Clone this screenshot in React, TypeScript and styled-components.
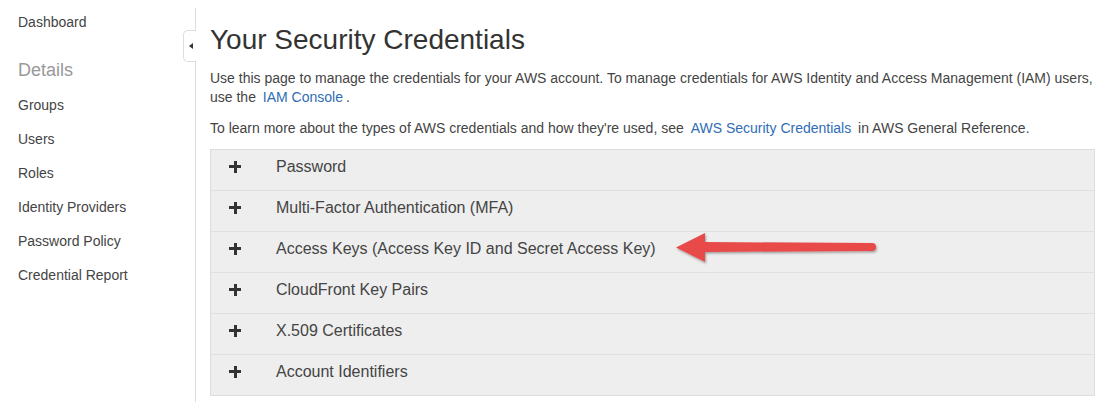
import React from 'react'
import styled, { createGlobalStyle } from 'styled-components'

const GlobalStyle = createGlobalStyle`
    html, body {
        margin: 0;
        padding: 0;
        background: #fff;
    }
    body {
        font-family: "Liberation Sans", Arial, sans-serif;
        color: #444;
    }
`

const PageStyled = styled.div`
    display: flex;
    width: 1102px;
    height: 402px;
    overflow: hidden;
    box-sizing: border-box;
`

const SidebarStyled = styled.nav`
    position: relative;
    flex: 0 0 196px;
    box-sizing: border-box;
    margin-top: 8px;
    padding: 4px 0 0 18px;
    border-right: 1px solid #ddd;
`

const SidebarListStyled = styled.ul`
    list-style: none;
    margin: 0;
    padding: 0;
    display: flex;
    flex-direction: column;
    gap: 14px;
`

const SidebarLinkStyled = styled.li`
    font-size: 14px;
    line-height: 20px;
    color: #444;
`

const SidebarHeadingStyled = styled.div`
    font-size: 18px;
    line-height: 24px;
    color: #999;
    margin: 26px 0 13px;
`

const CollapseTabStyled = styled.button`
    position: absolute;
    top: 22px;
    right: -1px;
    width: 13px;
    height: 32px;
    padding: 0;
    box-sizing: border-box;
    background: #fff;
    border: 1px solid #ddd;
    border-right: none;
    border-radius: 5px 0 0 5px;
    display: grid;
    place-items: center;
    cursor: pointer;
`

const CaretStyled = styled.span`
    width: 0;
    height: 0;
    margin-left: 1px;
    border-top: 3px solid transparent;
    border-bottom: 3px solid transparent;
    border-right: 4px solid #333;
`

const MainStyled = styled.main`
    flex: 1;
    padding: 0 7px 0 14px;
    min-width: 0;
`

const TitleStyled = styled.h1`
    margin: 24px 0 0;
    font-size: 28px;
    line-height: 32px;
    font-weight: normal;
    color: #333;
    white-space: nowrap;
`

const ParagraphStyled = styled.p<{ $top: number }>`
    margin: ${p => p.$top}px 0 0;
    font-size: 14px;
    line-height: 19px;
    color: #444;
    white-space: nowrap;
`

const LinkStyled = styled.a`
    color: #2f6db5;
    text-decoration: none;
    margin: 0 3px;
    cursor: pointer;
`

const AccordionStyled = styled.div`
    position: relative;
    margin-top: 11px;
    border: 1px solid #ddd;
    background: #eee;
`

const AccordionRowStyled = styled.div`
    display: flex;
    align-items: flex-start;
    height: 40px;
    box-sizing: border-box;
    padding: 7px 0 0 18px;
    border-top: 1px solid #e0e0e0;
    &:first-child {
        height: 40px;
        border-top: none;
    }
    & + & {
        height: 41px;
    }
`

const PlusStyled = styled.span`
    position: relative;
    flex: 0 0 12px;
    height: 20px;
    &::before, &::after {
        content: "";
        position: absolute;
        background: #333;
    }
    &::before {
        left: 0;
        top: 8px;
        width: 12px;
        height: 3px;
    }
    &::after {
        left: 4.5px;
        top: 3.5px;
        width: 3px;
        height: 12px;
    }
`

const RowLabelStyled = styled.span`
    margin-left: 35px;
    font-size: 16px;
    line-height: 20px;
    color: #444;
    white-space: nowrap;
`

const ArrowStyled = styled.svg`
    position: absolute;
    left: 463px;
    top: 80px;
    overflow: visible;
    pointer-events: none;
`

const sideLinks = ['Groups', 'Users', 'Roles', 'Identity Providers', 'Password Policy', 'Credential Report']

const sections = [
    'Password',
    'Multi-Factor Authentication (MFA)',
    'Access Keys (Access Key ID and Secret Access Key)',
    'CloudFront Key Pairs',
    'X.509 Certificates',
    'Account Identifiers',
]

const RedArrow = () => (
    <ArrowStyled width="210" height="36" viewBox="0 0 210 36">
        <defs>
            <filter id="arrowShadow" x="-10%" y="-30%" width="120%" height="160%">
                <feDropShadow dx="1" dy="1.5" stdDeviation="1.2" floodColor="#000" floodOpacity="0.35" />
            </filter>
        </defs>
        <g fill="#e84a4a" filter="url(#arrowShadow)">
            <path d="M2 17.5 L31 3 L31 32 Z" />
            <path d="M29 12 L198 13 A4 4 0 0 1 198 21 L29 22 Z" />
        </g>
    </ArrowStyled>
)

export default function App() {
    return (
        <>
            <GlobalStyle />
            <PageStyled>
                <SidebarStyled>
                    <SidebarListStyled>
                        <SidebarLinkStyled>Dashboard</SidebarLinkStyled>
                    </SidebarListStyled>
                    <SidebarHeadingStyled>Details</SidebarHeadingStyled>
                    <SidebarListStyled>
                        {sideLinks.map(x => <SidebarLinkStyled key={x}>{x}</SidebarLinkStyled>)}
                    </SidebarListStyled>
                    <CollapseTabStyled aria-label="Collapse">
                        <CaretStyled />
                    </CollapseTabStyled>
                </SidebarStyled>
                <MainStyled>
                    <TitleStyled>Your Security Credentials</TitleStyled>
                    <ParagraphStyled $top={13}>
                        Use this page to manage the credentials for your AWS account. To manage credentials for AWS Identity and Access Management (IAM) users,
                        <br />
                        use the <LinkStyled>IAM Console</LinkStyled>.
                    </ParagraphStyled>
                    <ParagraphStyled $top={12}>
                        To learn more about the types of AWS credentials and how they're used, see <LinkStyled>AWS Security Credentials</LinkStyled> in AWS General Reference.
                    </ParagraphStyled>
                    <AccordionStyled>
                        {sections.map(s => (
                            <AccordionRowStyled key={s}>
                                <PlusStyled />
                                <RowLabelStyled>{s}</RowLabelStyled>
                            </AccordionRowStyled>
                        ))}
                        <RedArrow />
                    </AccordionStyled>
                </MainStyled>
            </PageStyled>
        </>
    )
}
